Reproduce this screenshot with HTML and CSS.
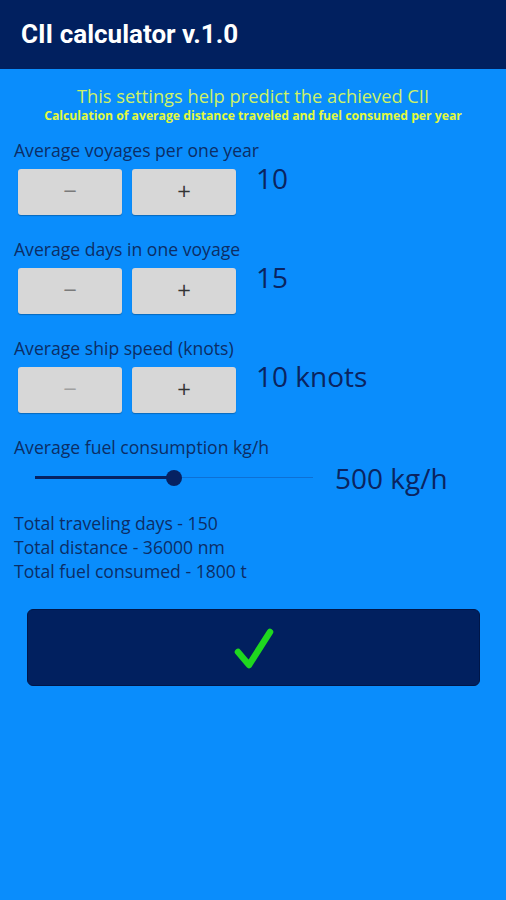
FILE: index.html
```html
<!DOCTYPE html>
<html lang="en">
<head>
    <meta charset="UTF-8">
    <title>CII calculator</title>
    <link rel="stylesheet" href="styles.css">
</head>
<body>
    <div class="bar">CII calculator v.1.0</div>
    <div class="page">
        <div class="intro">
            <p class="lead">This settings help predict the achieved CII</p>
            <p class="sub">Calculation of average distance traveled and fuel consumed per year</p>
        </div>

        <div class="field">
            <div class="label">Average voyages per one year</div>
            <div class="row">
                <span class="btn minus">&minus;</span>
                <span class="btn plus">+</span>
                <span class="value">10</span>
            </div>
        </div>
        <div class="field">
            <div class="label">Average days in one voyage</div>
            <div class="row">
                <span class="btn minus">&minus;</span>
                <span class="btn plus">+</span>
                <span class="value">15</span>
            </div>
        </div>
        <div class="field">
            <div class="label">Average ship speed (knots)</div>
            <div class="row">
                <span class="btn minus dim">&minus;</span>
                <span class="btn plus">+</span>
                <span class="value">10 knots</span>
            </div>
        </div>
        <div class="field">
            <div class="label">Average fuel consumption kg/h</div>
            <div class="slide-row">
                <div class="slider">
                    <div class="track"></div>
                    <div class="fill" style="width: 50%"></div>
                    <div class="thumb" style="left: 50%"></div>
                </div>
                <span class="value">500 kg/h</span>
            </div>
        </div>

        <div class="totals">
            <div>Total traveling days - 150</div>
            <div>Total distance - 36000 nm</div>
            <div>Total fuel consumed - 1800 t</div>
        </div>

        <div class="ok">
            <svg width="40" height="42" viewBox="0 0 40 42">
                <path d="M4 25 L15 38 L36 5" fill="none" stroke="#1fd81f" stroke-width="6.5" stroke-linecap="round" stroke-linejoin="round"/>
            </svg>
        </div>
    </div>
</body>
</html>
```

FILE: styles.css
```css
*{
    padding: 0;
    margin: 0;
}
body{
    background: #0a8dfc;
    font-family: "Open Sans", "Liberation Sans", sans-serif;
    color: #0c2d66;
}
.bar{
    height: 69px;
    background: #01205f;
    color: #ffffff;
    font-family: Roboto, "Liberation Sans", sans-serif;
    font-weight: 700;
    font-size: 26px;
    line-height: 69px;
    padding-left: 21px;
}
.page{
    padding: 15px 26px 0 14px;
}
.intro{
    text-align: center;
    padding-left: 12px;
}
.lead{
    color: #cdf266;
    font-size: 18.3px;
    line-height: 24px;
}
.sub{
    color: #e4fa3c;
    font-size: 12.2px;
    font-weight: 700;
    line-height: 16px;
}
.field{
    margin-top: 14px;
}
.field + .field{
    margin-top: 22px;
}
.label{
    font-size: 17.6px;
    line-height: 24px;
}
.row{
    display: flex;
    align-items: flex-start;
    gap: 10px;
    margin-top: 7px;
    padding-left: 4px;
}
.btn{
    width: 104px;
    height: 46px;
    background: #d7d7d7;
    border-radius: 3px;
    box-shadow: 0 1px 1px rgba(0,0,0,0.25);
    text-align: center;
    line-height: 44px;
    font-family: "DejaVu Sans", sans-serif;
    font-size: 18px;
    color: #333333;
}
.btn.minus{
    color: #7a7a7a;
}
.btn.dim{
    color: #a0a0a0;
}
.value{
    font-size: 28px;
    line-height: 28px;
    color: #0a2460;
    margin-top: -5px;
    margin-left: 10px;
}
.slide-row{
    display: flex;
    align-items: center;
    height: 38px;
}
.slider{
    position: relative;
    width: 278px;
    height: 16px;
    margin-left: 21px;
}
.track{
    position: absolute;
    left: 0;
    right: 0;
    top: 7px;
    height: 1px;
    background: rgba(20,60,140,0.35);
}
.fill{
    position: absolute;
    left: 0;
    top: 6px;
    height: 3px;
    background: #062262;
}
.thumb{
    position: absolute;
    top: 0;
    width: 16px;
    height: 16px;
    margin-left: -8px;
    border-radius: 50%;
    background: #062262;
}
.slide-row .value{
    margin: 0 0 0 22px;
    line-height: 38px;
}
.totals{
    margin-top: 14px;
    font-size: 17.6px;
    line-height: 24px;
}
.ok{
    margin: 26px 0 0 13px;
    height: 75px;
    background: #01205f;
    border: 1px solid #001648;
    border-radius: 6px;
    display: flex;
    align-items: center;
    justify-content: center;
}
```
